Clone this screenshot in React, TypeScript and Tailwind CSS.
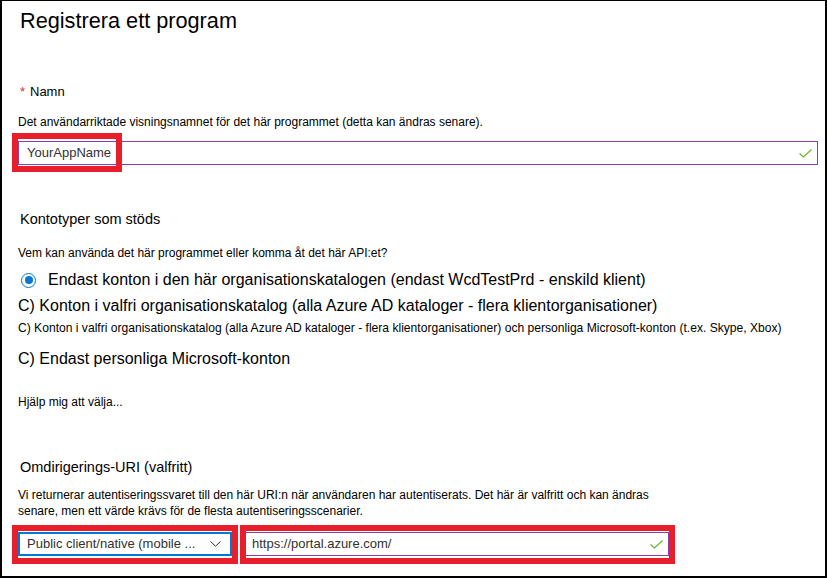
import React from "react";

function Check({ className }: { className?: string }) {
  return (
    <svg className={className} width="13" height="9" viewBox="0 0 13 9" fill="none">
      <polyline points="0.5,4.5 4.5,8 12.5,0.5" stroke="#6bb12f" strokeWidth="1.2" fill="none" />
    </svg>
  );
}

function Chevron() {
  return (
    <svg width="11" height="6" viewBox="0 0 11 6" fill="none">
      <polyline points="0.5,0.5 5.5,5.2 10.5,0.5" stroke="#323130" strokeWidth="1" fill="none" />
    </svg>
  );
}

export default function App() {
  return (
    <div
      className="relative w-[827px] h-[578px] bg-white border-black border-l-2 border-r-2 border-b-2 border-t text-black overflow-hidden"
      style={{ fontFamily: '"Liberation Sans", Arial, sans-serif' }}
    >
      <div className="pl-[16px] pr-[7px]">
        <div className="mt-[6px] pl-[2px] text-[21.7px] leading-[28px]">Registrera ett program</div>

        <div className="mt-[48px] pl-[2px] flex items-start text-[13px] leading-[18px]">
          <span className="text-[#d13438] w-[10px]">*</span>
          <span>Namn</span>
        </div>

        <div className="mt-[13px] text-[12px] leading-[16px]">
          Det användarriktade visningsnamnet för det här programmet (detta kan ändras senare).
        </div>

        <div className="mt-[11px] h-[24px] w-[800px] border border-[#8a3fa9] flex items-center pl-[8px] pr-[5px]">
          <span className="flex-1 text-[13px] leading-[20px] text-[#323130]">YourAppName</span>
          <Check />
        </div>

        <div className="mt-[44px] pl-[2px] text-[14.5px] leading-[20px]">Kontotyper som stöds</div>

        <div className="mt-[16px] text-[12px] leading-[16px]">
          Vem kan använda det här programmet eller komma åt det här API:et?
        </div>

        <div className="mt-[9px] flex items-center text-[16px] leading-[20px]">
          <span className="ml-[3px] mr-[12px] w-[15px] h-[15px] rounded-full border border-[#0078d4] flex items-center justify-center">
            <span className="w-[8px] h-[8px] rounded-full bg-[#0078d4]" />
          </span>
          <span>Endast konton i den här organisationskatalogen (endast WcdTestPrd - enskild klient)</span>
        </div>

        <div className="mt-[6px] text-[16px] leading-[20px]">
          C) Konton i valfri organisationskatalog (alla Azure AD kataloger - flera klientorganisationer)
        </div>

        <div className="mt-[6px] text-[12.1px] leading-[12px]">
          C) Konton i valfri organisationskatalog (alla Azure AD kataloger - flera klientorganisationer) och personliga Microsoft-konton (t.ex. Skype, Xbox)
        </div>

        <div className="mt-[15px] text-[16px] leading-[20px]">C) Endast personliga Microsoft-konton</div>

        <div className="mt-[25px] text-[12px] leading-[16px]">Hjälp mig att välja...</div>

        <div className="mt-[47px] pl-[2px] text-[14.5px] leading-[20px]">Omdirigerings-URI (valfritt)</div>

        <div className="mt-[10px] text-[12px] leading-[16px]">
          Vi returnerar autentiseringssvaret till den här URI:n när användaren har autentiserats. Det här är valfritt och kan ändras
          <br />
          senare, men ett värde krävs för de flesta autentiseringsscenarier.
        </div>

        <div className="mt-[13px] flex items-start gap-[13px]">
          <div className="h-[24px] w-[214px] border-2 border-[#0078d4] flex items-center pl-[7px] pr-[9px]">
            <span className="flex-1 text-[13px] leading-[20px] text-[#323130] whitespace-nowrap overflow-hidden">
              Public client/native (mobile ...
            </span>
            <Chevron />
          </div>
          <div className="h-[24px] w-[424px] border border-[#8a3fa9] flex items-center pl-[6px] pr-[5px]">
            <span className="flex-1 text-[13px] leading-[20px] text-[#323130]">https://portal.azure.com/</span>
            <Check />
          </div>
        </div>
      </div>

      {/* annotation boxes */}
      <div className="absolute left-[10px] top-[132px] w-[110px] h-[39px] border-[6px] border-[#e81f2a]" />
      <div className="absolute left-[10px] top-[524px] w-[226px] h-[39px] border-[6px] border-[#e81f2a]" />
      <div className="absolute left-[238px] top-[524px] w-[435px] h-[39px] border-[6px] border-[#e81f2a]" />
    </div>
  );
}
